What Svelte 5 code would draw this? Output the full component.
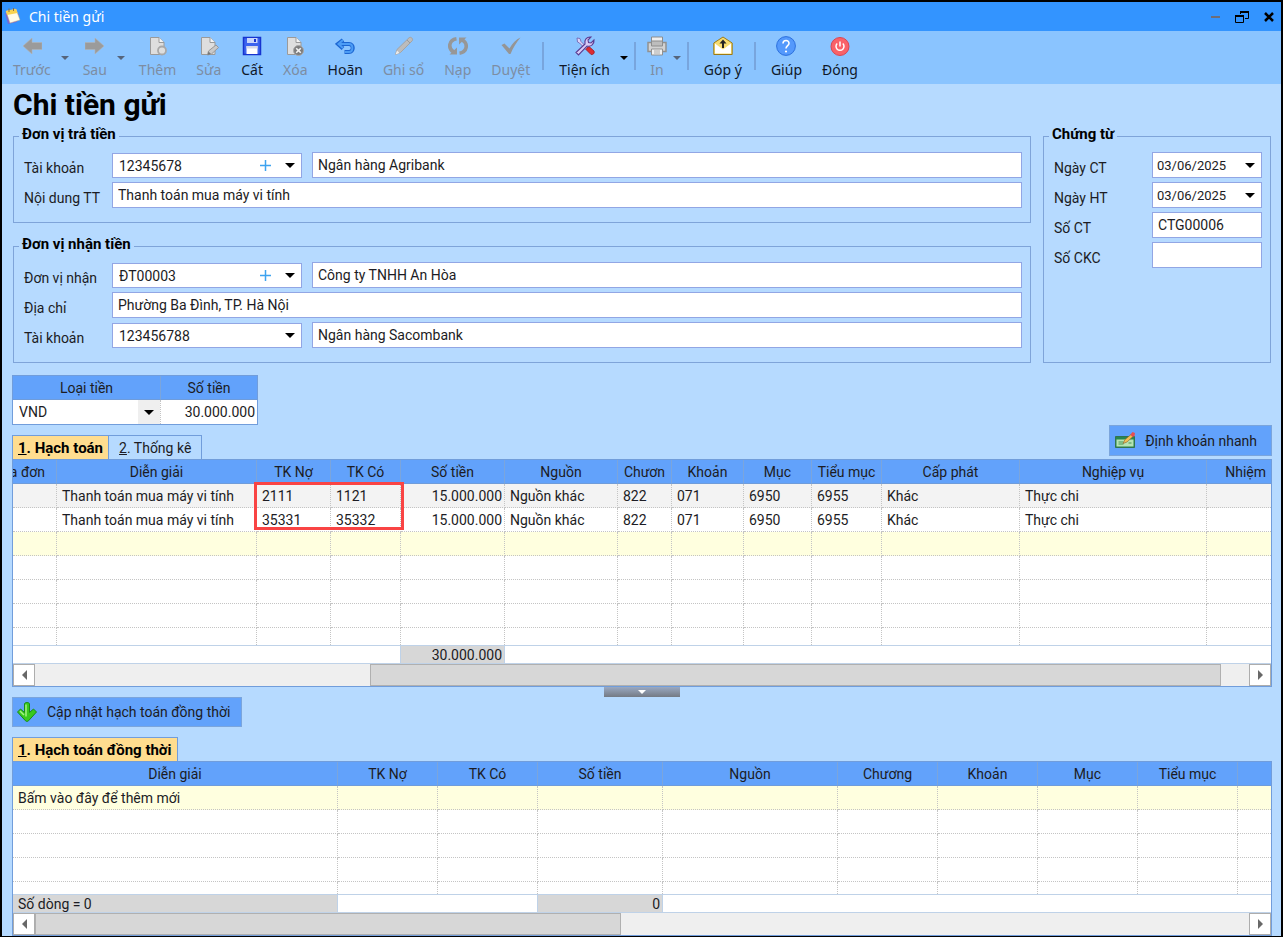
<script lang="ts">
  type Tool = { id: string; label: string; off?: boolean; menu?: boolean; sep?: boolean };
  type Column = { title: string; width?: number; align?: string };

  const tools: Tool[] = [
    { id: "prev", label: "Trước", off: true, menu: true },
    { id: "next", label: "Sau", off: true, menu: true },
    { id: "add", label: "Thêm", off: true },
    { id: "edit", label: "Sửa", off: true },
    { id: "save", label: "Cất" },
    { id: "delete", label: "Xóa", off: true },
    { id: "undo", label: "Hoãn" },
    { id: "post", label: "Ghi sổ", off: true },
    { id: "reload", label: "Nạp", off: true },
    { id: "approve", label: "Duyệt", off: true, sep: true },
    { id: "utils", label: "Tiện ích", menu: true, sep: true },
    { id: "print", label: "In", off: true, menu: true, sep: true },
    { id: "feedback", label: "Góp ý", sep: true },
    { id: "help", label: "Giúp" },
    { id: "close", label: "Đóng" },
  ];

  const entryColumns: Column[] = [
    { title: "Hóa đơn", width: 44, align: "clipped" },
    { title: "Diễn giải", width: 200 },
    { title: "TK Nợ", width: 74 },
    { title: "TK Có", width: 70 },
    { title: "Số tiền", width: 104, align: "num" },
    { title: "Nguồn", width: 113 },
    { title: "Chươn", width: 54 },
    { title: "Khoản", width: 72 },
    { title: "Mục", width: 68 },
    { title: "Tiểu mục", width: 70 },
    { title: "Cấp phát", width: 138 },
    { title: "Nghiệp vụ", width: 187 },
    { title: "Nhiệm", align: "end" },
  ];

  const entries = [
    ["", "Thanh toán mua máy vi tính", "2111", "1121", "15.000.000", "Nguồn khác", "822", "071", "6950", "6955", "Khác", "Thực chi", ""],
    ["", "Thanh toán mua máy vi tính", "35331", "35332", "15.000.000", "Nguồn khác", "822", "071", "6950", "6955", "Khác", "Thực chi", ""],
  ];

  const parallelColumns: Column[] = [
    { title: "Diễn giải", width: 325 },
    { title: "TK Nợ", width: 100 },
    { title: "TK Có", width: 100 },
    { title: "Số tiền", width: 125, align: "num" },
    { title: "Nguồn", width: 175 },
    { title: "Chương", width: 100 },
    { title: "Khoản", width: 100 },
    { title: "Mục", width: 100 },
    { title: "Tiểu mục", width: 100 },
    { title: "" },
  ];

  let account = $state("12345678");
  let description = $state("Thanh toán mua máy vi tính");
  let receiver = $state("ĐT00003");
  let address = $state("Phường Ba Đình, TP. Hà Nội");
  let voucherNo = $state("CTG00006");
</script>

{#snippet caret(size = 10)}
  <svg class="caret" width={size} height={size / 2} viewBox="0 0 10 5" aria-hidden="true"><path d="M0 0h10L5 5z" fill="currentColor" /></svg>
{/snippet}

{#snippet page()}
  <path d="M2.500 1.500h8.500l5 5v12H2.500z" fill="#dedede" stroke="#9a9a9a" />
  <path d="M11 1.500v5h5" fill="#f4f4f4" stroke="#9a9a9a" />
{/snippet}

{#snippet icon(id: string)}
  <svg class="icon" width="20" height="20" viewBox="0 0 20 20" fill="none" aria-hidden="true">
    {#if id === "prev"}
      <path d="M1 10l9-8v4.500h10v7H10V18z" fill="#9b9b9b" stroke="#b4b4b4" stroke-width=".6" />
    {:else if id === "next"}
      <path d="M19 10l-9-8v4.500H0v7h10V18z" fill="#9b9b9b" stroke="#b4b4b4" stroke-width=".6" />
    {:else if id === "add"}
      {@render page()}
      <circle cx="14" cy="14.500" r="4" fill="#dedede" stroke="#a8a8a8" stroke-width="1.800" />
    {:else if id === "edit"}
      {@render page()}
      <path d="M8.500 19l1-4L17 9l2.500 2.500L12.500 18z" fill="#c9c9c9" stroke="#979797" />
      <path d="M8.500 19l1-3.500 2.500 2.500z" fill="#777" />
    {:else if id === "save"}
      <path d="M1.500 1.500h17v17h-17z" fill="#3c63ee" stroke="#1734cf" stroke-width="1.500" />
      <path d="M5 2h10.500v5H5z" fill="#c9d5fb" />
      <path d="M12 3h2v3h-2z" fill="#1734cf" />
      <path d="M4.500 10h11v8h-11z" fill="#fff" />
      <path d="M4.500 10h11v2.500h-11z" fill="#d5d9e9" />
    {:else if id === "delete"}
      {@render page()}
      <circle cx="13.500" cy="14.500" r="5" fill="#7d7d7d" stroke="#a8a8a8" />
      <path d="M11.200 12.200l4.600 4.600m0-4.600l-4.600 4.600" stroke="#f2f2f2" stroke-width="1.600" />
    {:else if id === "undo"}
      <path d="M8 4L3 8l5 4.500M3.500 8H14c5 0 5 8 0 8H9.500" stroke="#1c66d2" stroke-width="4" />
      <path d="M8 4L3.500 8l4.500 4M4 8h10c4.500 0 4.500 8 0 8h-4" stroke="#4b9cf5" stroke-width="2" />
    {:else if id === "post"}
      <path d="M1.500 18.500l1.500-5L15 1.800c2-1.500 4.500 1 3.200 3L6.500 16.500z" fill="#bcbcbc" stroke="#a4a4a4" />
      <path d="M1.500 18.500l1.500-4 2.500 2.500z" fill="#eee" />
      <path d="M13 4l3 3" stroke="#999" />
    {:else if id === "reload"}
      <path d="M8.500 2.800C1 4-.5 12 5.500 16" stroke="#979797" stroke-width="3.600" />
      <path d="M1.500 18.500h7.500v-7z" fill="#979797" />
      <path d="M11.500 17.200C19 16 20.500 8 14.500 4" stroke="#979797" stroke-width="3.600" />
      <path d="M18.500 1.500H11v7z" fill="#979797" />
    {:else if id === "approve"}
      <path d="M.5 9l3-1.500 5 5C11.500 7 15 3.500 19.500 1.500 15.500 6 12 12 9.500 18H8z" fill="#959595" />
    {:else if id === "utils"}
      <path d="M2 2l3 .5 1 3 7 7-1.500 1.500-7-7-2-1z" fill="#dcd5fa" stroke="#6c5ca9" stroke-width=".8" />
      <path d="M12 12l2-1.500 5 4.500c1 2-1 4-3 3.500l-5-5z" fill="#dd2c32" stroke="#9a1822" stroke-width=".8" />
      <path d="M1 16.500l9-8.500c-1-4 1.500-7.500 6-7l-3 3 .5 2.500 2.500.5 3-3c.5 4-3 7-7 6l-8.500 9z" fill="#d9cdf8" stroke="#5c3c91" stroke-width="1.100" />
    {:else if id === "print"}
      <path d="M4.500 1h11v7h-11z" fill="#eee" stroke="#8d8d8d" />
      <path d="M1 6.500h18v9H1z" fill="#d2d2d2" stroke="#919191" stroke-width="1.500" />
      <path d="M4.500 5h11v5h-11z" fill="#bdbdbd" stroke="#8d8d8d" />
      <path d="M4.500 13h11v6h-11z" fill="#f1f1f1" stroke="#919191" />
      <path d="M7 15h6M7 17h6" stroke="#aaa" />
    {:else if id === "feedback"}
      <path d="M.8 7L10 1l9.200 6v11.500H.8z" fill="#f7dc70" stroke="#9c7a17" />
      <path d="M2 7.500l8 6 8-6v10H2z" fill="#fff" />
      <path d="M10 3.500l3.500 4h-2.500V12H9V7.500H6.500z" fill="#222" />
    {:else if id === "help"}
      <circle cx="10" cy="10" r="9.400" fill="#5499fc" stroke="#2c70dd" />
      <path d="M7 7.500c0-4 6.200-4 6 0 0 2-3 2.500-3 5" stroke="#fff" stroke-width="1.600" />
      <circle cx="10" cy="15.500" r="1.100" fill="#fff" />
    {:else if id === "close"}
      <circle cx="10" cy="10.500" r="9" fill="#f96269" stroke="#dc4550" />
      <path d="M7.200 7.500a4 4 0 1 0 5.600 0M10 5.500v5" stroke="#fff" stroke-width="1.500" />
    {:else if id === "quick"}
      <path d="M.5 5.500h19v11H.5z" fill="#278653" stroke="#32744e" />
      <path d="M1.500 8.500h17v7h-17z" fill="#b6e4b3" />
      <path d="M3.500 11h5m-5 2h5m5-1h3" stroke="#479554" />
      <path d="M8 12.500l2-4 6-5 2 2-6 5.500z" fill="#f4bd52" stroke="#80602d" stroke-width=".6" />
      <path d="M15.500 3.500l2-2.500 2.500 1-.5 3-2 1z" fill="#e74d51" />
    {:else if id === "update"}
      <path d="M7.500 2c0-2 5-2 5 0v8.500l4-3.500 3 3-8 8.800c-1 .8-2 .8-3 0L.5 10l3-3 4 3.500z" fill="#38c91e" stroke="#198c18" />
      <path d="M9 2.500v12M3 9l4 4" stroke="#a5f184" stroke-width="1.500" />
    {/if}
  </svg>
{/snippet}

{#snippet lookup(id: string, label: string, value: string, addable: boolean)}
  <div class="combo">
    <select {id} aria-label={label}>
      <option>{value}</option>
    </select>
    {#if addable}
      <button class="plus" type="button" aria-label="Thêm {label}">
        <svg width="11" height="11" viewBox="0 0 11 11"><path d="M5.500 0v11M0 5.500h11" stroke="#3da3ef" stroke-width="1.500" /></svg>
      </button>
    {/if}
    {@render caret()}
  </div>
{/snippet}

{#snippet scrollbar(start: number, size: number)}
  <div class="scrollbar">
    <button type="button" aria-label="Cuộn trái"><svg width="5" height="10" viewBox="0 0 5 10"><path d="M5 0v10L0 5z" fill="#686868" /></svg></button>
    <div class="track">
      <div class="thumb" style="margin-left: {start}%; width: {size}%"></div>
    </div>
    <button type="button" aria-label="Cuộn phải"><svg width="5" height="10" viewBox="0 0 5 10"><path d="M0 0v10l5-5z" fill="#686868" /></svg></button>
  </div>
{/snippet}

{#snippet head(columns: Column[])}
  <colgroup>
    {#each columns as col}
      <col style={col.width ? `width: ${col.width}px` : undefined} />
    {/each}
  </colgroup>
  <thead>
    <tr>
      {#each columns as col}
        <th class={col.align}>{col.title}</th>
      {/each}
    </tr>
  </thead>
{/snippet}

{#snippet blankRow(columns: Column[], kind = "", first = "")}
  <tr class={kind}>
    {#each columns as _, i}
      <td>{i === 0 ? first : ""}</td>
    {/each}
  </tr>
{/snippet}

<div class="window">
  <header class="titlebar">
    <svg width="16" height="18" viewBox="0 0 16 18" aria-hidden="true">
      <path d="M0 5l3 11 9-2 2-8z" fill="#7968ce" />
      <path d="M1 3l10-2 4 11-10 3z" fill="#fffbe8" stroke="#c1ad82" stroke-width=".5" />
      <path d="M1 3l10-2 1.500 4L2 7z" fill="#f9d34f" />
      <path d="M4 4V.5M8.500 3V0" stroke="#8b7040" />
    </svg>
    <span class="caption">Chi tiền gửi</span>
    <button type="button" aria-label="Thu nhỏ"><svg width="14" height="14" viewBox="0 0 14 14"><path d="M3 7h9" stroke="#6d6d78" stroke-width="2" /></svg></button>
    <button type="button" aria-label="Khôi phục"><svg width="14" height="14" viewBox="0 0 14 14" fill="none" stroke="#000"><path d="M5.500 4V1.500h8v7H10" /><path d="M5 2h9M0 6h9" stroke-width="2" /><path d="M.5 5.500h8v7h-8z" /></svg></button>
    <button type="button" aria-label="Đóng cửa sổ"><svg width="14" height="14" viewBox="0 0 14 14"><path d="M3 3l8 8m0-8l-8 8" stroke="#000" stroke-width="2.500" /></svg></button>
  </header>

  <nav class="toolbar">
    {#each tools as tool}
      <button class="tool {tool.id}" type="button" disabled={tool.off}>
        {@render icon(tool.id)}
        <span>{tool.label}</span>
      </button>
      {#if tool.menu}
        <button class="more" type="button" disabled={tool.off} aria-label="{tool.label}: thêm lựa chọn">{@render caret(8)}</button>
      {/if}
      {#if tool.sep}
        <span class="sep"></span>
      {/if}
    {/each}
  </nav>

  <main>
    <h1>Chi tiền gửi</h1>

    <div class="form">
      <div class="parties">
        <fieldset>
          <legend>Đơn vị trả tiền</legend>
          <div class="row">
            <label for="account">Tài khoản</label>
            {@render lookup("account", "Tài khoản", account, true)}
            <input class="grow" aria-label="Ngân hàng trả" value="Ngân hàng Agribank" />
          </div>
          <div class="row">
            <label for="description">Nội dung TT</label>
            <input id="description" class="grow" bind:value={description} />
          </div>
        </fieldset>

        <fieldset>
          <legend>Đơn vị nhận tiền</legend>
          <div class="row">
            <label for="receiver">Đơn vị nhận</label>
            {@render lookup("receiver", "Đơn vị nhận", receiver, true)}
            <input class="grow" aria-label="Tên đơn vị nhận" value="Công ty TNHH An Hòa" />
          </div>
          <div class="row">
            <label for="address">Địa chỉ</label>
            <input id="address" class="grow" bind:value={address} />
          </div>
          <div class="row">
            <label for="receiver-account">Tài khoản</label>
            {@render lookup("receiver-account", "Tài khoản nhận", "123456788", false)}
            <input class="grow" aria-label="Ngân hàng nhận" value="Ngân hàng Sacombank" />
          </div>
        </fieldset>
      </div>

      <fieldset class="voucher">
        <legend>Chứng từ</legend>
        {#each ["Ngày CT", "Ngày HT"] as label, i}
          <div class="row">
            <label for="date-{i}">{label}</label>
            <div class="date">
              <input id="date-{i}" value="03/06/2025" />
              <button type="button" aria-label="Chọn {label}">{@render caret()}</button>
            </div>
          </div>
        {/each}
        <div class="row">
          <label for="voucher-no">Số CT</label>
          <input id="voucher-no" bind:value={voucherNo} />
        </div>
        <div class="row">
          <label for="ckc-no">Số CKC</label>
          <input id="ckc-no" />
        </div>
      </fieldset>
    </div>

    <div class="grid currency">
      <table>
        <colgroup><col style="width: 148px" /><col /></colgroup>
        <thead>
          <tr><th>Loại tiền</th><th class="amount">Số tiền</th></tr>
        </thead>
        <tbody>
          <tr>
            <td class="unit">
              <select aria-label="Loại tiền"><option>VND</option></select>
              <span class="drop">{@render caret()}</span>
            </td>
            <td class="num">30.000.000</td>
          </tr>
        </tbody>
      </table>
    </div>

    <div class="bar">
      <div class="tabs" role="tablist">
        <button class="tab active" type="button" role="tab" aria-selected="true"><u>1</u>. Hạch toán</button>
        <button class="tab" type="button" role="tab" aria-selected="false"><u>2</u>. Thống kê</button>
      </div>
      <button class="action quick-entry" type="button">{@render icon("quick")}Định khoản nhanh</button>
    </div>

    <div class="grid">
      <table>
        {@render head(entryColumns)}
        <tbody>
          {#each entries as entry, r}
            <tr class:current={r === 0}>
              {#each entry as cell, i}
                <td class={entryColumns[i].align}>{cell}</td>
              {/each}
            </tr>
          {/each}
          {@render blankRow(entryColumns, "new")}
          {#each [1, 2, 3] as _}
            {@render blankRow(entryColumns)}
          {/each}
          {@render blankRow(entryColumns, "cut")}
        </tbody>
        <tfoot>
          <tr>
            <td colspan="4"></td>
            <td class="num total">30.000.000</td>
            <td colspan="8"></td>
          </tr>
        </tfoot>
      </table>
      {@render scrollbar(27.6, 70.1)}
      <div class="highlight"></div>
    </div>

    <button class="splitter" type="button" aria-label="Thu gọn">{@render caret(8)}</button>

    <button class="action update" type="button">{@render icon("update")}Cập nhật hạch toán đồng thời</button>

    <div class="tabs" role="tablist">
      <button class="tab active" type="button" role="tab" aria-selected="true"><u>1</u>. Hạch toán đồng thời</button>
    </div>

    <div class="grid parallel">
      <table>
        {@render head(parallelColumns)}
        <tbody>
          {@render blankRow(parallelColumns, "new", "Bấm vào đây để thêm mới")}
          {#each [1, 2, 3] as _}
            {@render blankRow(parallelColumns)}
          {/each}
          {@render blankRow(parallelColumns, "cut")}
        </tbody>
        <tfoot>
          <tr>
            <td class="total">Số dòng = 0</td>
            <td colspan="2"></td>
            <td class="num total">0</td>
            <td colspan="6"></td>
          </tr>
        </tfoot>
      </table>
      {@render scrollbar(0, 48.3)}
    </div>
  </main>
</div>

<style>
  :global(body) {
    margin: 0;
  }

  .window {
    --line: #719ddb;
    --head: #62a2fb;
    --field-line: #92a6e4;

    box-sizing: border-box;
    min-height: 100vh;
    border: 2px solid #000;
    background: #b6daff;
    color: #1c1c24;
    font: 14px/16px Roboto, "Liberation Sans", sans-serif;
  }

  .window :global(*) {
    box-sizing: border-box;
  }

  button,
  input,
  select {
    font: inherit;
    color: inherit;
    margin: 0;
    border-radius: 0;
    outline: none;
  }

  button {
    background: none;
    border: 0;
    padding: 0;
  }

  svg {
    display: block;
    flex: none;
  }

  .titlebar {
    display: flex;
    align-items: center;
    height: 29px;
    padding: 0 5px 0 3px;
    gap: 13px;
    background: #3394ff;
    color: #fff;
    font-family: "Noto Sans", "Open Sans", sans-serif;
  }

  .caption {
    flex: 1;
    margin-left: -5px;
  }

  .toolbar {
    display: flex;
    height: 53px;
    padding-left: 1px;
    background: #8ac4ff;
    font-family: "Noto Sans", "Open Sans", sans-serif;
  }

  .tool {
    display: flex;
    flex-direction: column;
    align-items: center;
    padding: 5px 10px 0;
    gap: 4px;
    line-height: 20px;
    white-space: nowrap;
    color: #101828;
  }

  .tool:disabled {
    color: #7d8da3;
  }

  .tool.print {
    padding: 5px 6px 0;
  }

  .more {
    width: 12px;
    margin: 0 2px 0 -2px;
    display: flex;
    justify-content: center;
    align-items: center;
    color: #000;
  }

  .more:disabled {
    color: #56657c;
  }

  .sep {
    width: 2px;
    height: 28px;
    margin: 11px 5px 0 2px;
    background: #78a5dd;
  }

  main {
    padding: 0 9px 0 10px;
  }

  h1 {
    margin: 0;
    padding-left: 1px;
    font-size: 30px;
    line-height: 42px;
    font-weight: 700;
    color: #000;
  }

  .form {
    display: flex;
    gap: 12px;
    padding: 0 1px;
  }

  .parties {
    flex: 1;
    display: flex;
    flex-direction: column;
    gap: 13px;
    min-width: 0;
  }

  fieldset {
    margin: 0;
    min-width: 0;
    padding: 6px 8px 14px 10px;
    border: 1px solid #7fa4d9;
  }

  legend {
    margin-left: -5px;
    padding: 0 3px 4px;
    font-size: 15px;
    font-weight: 700;
    color: #000;
  }

  .voucher {
    width: 228px;
  }

  .row {
    display: flex;
    align-items: flex-end;
    height: 26px;
  }

  .row + .row {
    margin-top: 4px;
  }

  label {
    width: 88px;
    line-height: 20px;
    white-space: nowrap;
  }

  .voucher label {
    flex: 1;
  }

  input {
    min-width: 0;
    height: 26px;
    padding: 0 5px;
    border: 1px solid var(--field-line);
    background: #fff;
  }

  .voucher input {
    width: 110px;
  }

  .grow {
    flex: 1;
  }

  .combo {
    position: relative;
    width: 190px;
    height: 25px;
    margin-right: 10px;
  }

  select {
    display: block;
    width: 100%;
    height: 100%;
    padding: 0 6px;
    appearance: none;
    border: 1px solid var(--field-line);
    background: #fff;
  }

  .combo > .caret {
    position: absolute;
    right: 7px;
    top: 10px;
    color: #000;
    pointer-events: none;
  }

  .plus {
    position: absolute;
    right: 31px;
    top: 7px;
  }

  .date {
    position: relative;
  }

  .date input {
    display: block;
    padding: 0 4px;
    font-size: 13px;
  }

  .date button {
    position: absolute;
    top: 1px;
    right: 1px;
    width: 20px;
    height: 24px;
    padding-left: 4px;
    color: #000;
  }

  .grid {
    position: relative;
    border: 1px solid var(--line);
    background: #fff;
  }

  .currency {
    width: 246px;
    margin-top: 12px;
  }

  table {
    width: 100%;
    table-layout: fixed;
    border-spacing: 0;
  }

  th,
  td {
    height: 24px;
    padding: 0 5px;
    overflow: hidden;
    white-space: nowrap;
    text-align: left;
    border-right: 1px dotted #c4c4c4;
    border-bottom: 1px dotted #c4c4c4;
  }

  th {
    text-align: center;
    font-weight: 400;
    background: var(--head);
    border-right: 1px solid #7ba5dc;
    border-bottom: 1px solid #6f9cda;
  }

  th:last-child,
  td:last-child {
    border-right: 0;
  }

  td.num {
    text-align: right;
    padding-right: 2px;
  }

  /* scrolled half out of view, so the overflow goes to the left */
  th.clipped {
    direction: rtl;
    text-align: right;
    padding: 0 12px 0 0;
  }

  th.end {
    text-align: right;
  }

  .unit {
    position: relative;
    padding: 0;
  }

  .unit select {
    border: 0;
    height: 23px;
  }

  .currency td {
    border-bottom: 0;
  }

  .drop {
    position: absolute;
    top: 0;
    right: 0;
    bottom: 0;
    width: 22px;
    display: grid;
    place-items: center;
    background: #efefef;
    color: #000;
    pointer-events: none;
  }

  .bar {
    display: flex;
    justify-content: space-between;
    align-items: flex-start;
    height: 34px;
  }

  .bar .tabs {
    align-self: flex-end;
  }

  .tabs {
    display: flex;
  }

  .tab {
    height: 24px;
    padding: 0 10px;
    border: 1px solid var(--line);
    border-bottom: 0;
    white-space: nowrap;
  }

  .tab + .tab {
    border-left: 0;
  }

  .tab.active {
    padding: 0 5px;
    font-size: 15px;
    font-weight: 700;
    background: #ffdd8f;
    color: #000;
  }

  .action {
    display: flex;
    align-items: center;
    gap: 10px;
    height: 31px;
    padding: 0 14px 0 5px;
    background: var(--head);
    border: 1px solid #7ba5dc;
    white-space: nowrap;
  }

  .update {
    height: 30px;
    padding: 0 11px 0 4px;
    margin-bottom: 10px;
  }

  .current td {
    background: #f3f3f3;
  }

  .new td {
    background: #ffffdf;
  }

  .cut td {
    height: 17px;
    border-bottom: 0;
  }

  .parallel .cut td {
    height: 12px;
  }

  tfoot td {
    height: 19px;
    line-height: 16px;
    border-top: 1px solid #bfd2e8;
    border-right: 1px solid #bfd2e8;
    border-bottom: 1px solid #bfd2e8;
  }

  tfoot .total {
    background: #d7d7d7;
  }

  .scrollbar {
    display: flex;
    height: 22px;
    background: #efefef;
  }

  .scrollbar button {
    width: 22px;
    display: grid;
    place-items: center;
    background: #fff;
    border: 1px solid #adadad;
  }

  .track {
    flex: 1;
  }

  .thumb {
    height: 22px;
    background: #d7d7d7;
    border: 1px solid #b0b0b0;
  }

  /* marks the debit and credit accounts of both entries */
  .highlight {
    position: absolute;
    top: 22px;
    left: 241px;
    width: 150px;
    height: 48px;
    border: 3px solid #f94444;
    pointer-events: none;
  }

  .splitter {
    display: flex;
    justify-content: center;
    align-items: center;
    width: 76px;
    height: 10px;
    margin: 0 auto;
    background: linear-gradient(#9aa9c2, #747a84);
    color: #fff;
  }
</style>
